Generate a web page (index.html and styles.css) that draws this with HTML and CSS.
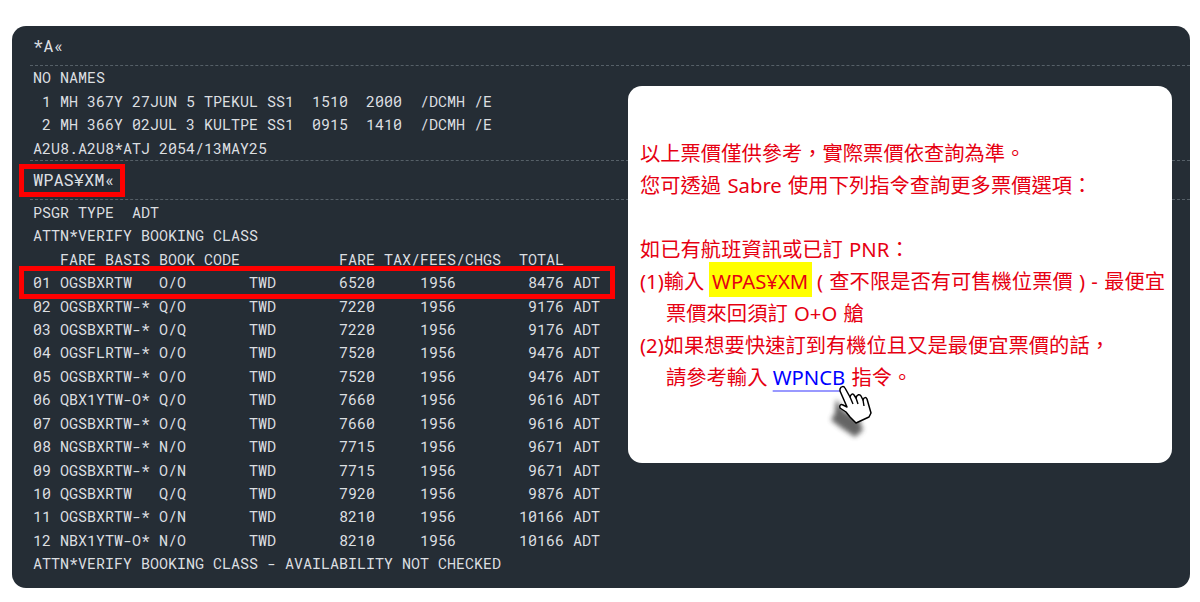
FILE: index.html
```html
<!DOCTYPE html>
<html lang="zh-Hant">
<head>
<meta charset="utf-8">
<title>WPAS</title>
<link rel="stylesheet" href="styles.css">
</head>
<body>
<main class="terminal">
<section class="block block-cmd"><pre class="cmd">*A«</pre></section>
<section class="block block-pnr"><pre>NO NAMES
 1 MH 367Y 27JUN 5 TPEKUL SS1  1510  2000  /DCMH /E
 2 MH 366Y 02JUL 3 KULTPE SS1  0915  1410  /DCMH /E
A2U8.A2U8*ATJ 2054/13MAY25</pre></section>
<section class="block block-cmd2"><pre class="cmd">WPAS¥XM«</pre><div class="mark mark-cmd"></div></section>
<section class="block block-fares"><pre>PSGR TYPE  ADT
ATTN*VERIFY BOOKING CLASS
   FARE BASIS BOOK CODE           FARE TAX/FEES/CHGS  TOTAL
01 OGSBXRTW   O/O       TWD       6520     1956        8476 ADT
02 OGSBXRTW-* Q/O       TWD       7220     1956        9176 ADT
03 OGSBXRTW-* O/Q       TWD       7220     1956        9176 ADT
04 OGSFLRTW-* O/O       TWD       7520     1956        9476 ADT
05 OGSBXRTW-* O/O       TWD       7520     1956        9476 ADT
06 QBX1YTW-O* Q/O       TWD       7660     1956        9616 ADT
07 OGSBXRTW-* O/Q       TWD       7660     1956        9616 ADT
08 NGSBXRTW-* N/O       TWD       7715     1956        9671 ADT
09 OGSBXRTW-* O/N       TWD       7715     1956        9671 ADT
10 QGSBXRTW   Q/Q       TWD       7920     1956        9876 ADT
11 OGSBXRTW-* O/N       TWD       8210     1956       10166 ADT
12 NBX1YTW-O* N/O       TWD       8210     1956       10166 ADT
ATTN*VERIFY BOOKING CLASS - AVAILABILITY NOT CHECKED</pre><div class="mark mark-row"></div></section>
<aside class="note">
<p>以上票價僅供參考，實際票價依查詢為準。</p>
<p>您可透過 Sabre 使用下列指令查詢更多票價選項：</p>
<p class="gap">如已有航班資訊或已訂 PNR：</p>
<p>(1)輸入 <span class="hl">WPAS¥XM</span> ( 查不限是否有可售機位票價 ) - 最便宜</p>
<p class="indent">票價來回須訂 O+O 艙</p>
<p>(2)如果想要快速訂到有機位且又是最便宜票價的話，</p>
<p class="indent">請參考輸入 <span class="link">WPNCB</span> 指令。</p>
<svg class="hand" viewBox="0 0 50 60" width="50" height="60" aria-hidden="true">
<defs><filter id="blur" x="-40%" y="-40%" width="180%" height="180%"><feGaussianBlur stdDeviation="2.4"/></filter></defs>
<path class="hand-shadow" filter="url(#blur)" d="M4 15 L12 27 L27 35 L31 46 L23 53 L8 43 L-1 36 L3 29 Z"/>
<path class="hand-shape" d="M8 5 C9 2 12 2 13 4 L18 13 C19 10 21 9 22 11 L24 14 C25 10 28 10 29 12 L31 16 C32 13 34 13 35 15 L39 29 L37 33 L24 39 L18 33 L14 28 L8 24 C7 21 9 20 11 21 L15 23 L8 7 Z"/>
<path class="hand-line" d="M18 13 L21 20 M24 14 L26 20 M31 16 L32 22"/>
</svg>
</aside>
</main>
</body>
</html>
```
FILE: styles.css
```css
html, body { margin: 0; padding: 0; background: #fff; }
body { width: 1200px; height: 602px; overflow: hidden; }
.terminal {
  position: relative;
  box-sizing: border-box;
  margin: 26px 10px 14px 12px;
  height: 562px;
  background: #252d35;
  border-radius: 14px;
  padding: 8px 0 0;
  color: #dcdfe1;
}
pre {
  margin: 0;
  font: 15px/23.4px "Roboto Mono", "Liberation Mono", monospace;
  padding-left: 3px;
}
pre.cmd { font-size: 17px; }
.block { position: relative; border-bottom: 1px dashed #566068; margin: 0 0 0 18px; }
.block-cmd { padding: 0 0 8px; }
.block-cmd2 { padding: 7px 0 8px; }
.block-fares { border-bottom: 0; padding-top: .6px; }
.mark { position: absolute; border: 5px solid #f00; box-sizing: border-box; }
.mark-cmd { left: -11px; top: 3px; width: 106px; height: 33px; }
.mark-row { left: -11px; top: 66px; width: 596px; height: 33px; }
.note {
  position: absolute;
  left: 616px;
  top: 60px;
  box-sizing: border-box;
  width: 544px;
  height: 377px;
  padding: 50.6px 0 0 12px;
  background: #fff;
  border-radius: 14px;
  color: #e60012;
  font: 20.3px/32.200px "Noto Sans", "Noto Sans CJK TC", sans-serif;
  word-spacing: 1px;
  white-space: nowrap;
}
.note p { margin: 0; }
.note .gap { margin-top: 31.6px; }
.note .indent { padding-left: 26px; }
.hl { background: #ff0; padding: 5px 3.5px 2px; margin-left: -2px; margin-right: -1px; }
.link { color: #00f; text-decoration: underline 2px #99f; text-underline-offset: 5px; margin-left: -1px; }
.hand { position: absolute; left: 204px; top: 298px; overflow: visible; }
.hand-shadow { fill: #4a4a4a; opacity: .85; }
.hand-shape { fill: #fff; stroke: #000; stroke-width: 1.5; stroke-linejoin: round; }
.hand-line { fill: none; stroke: #000; stroke-width: 1.4; }
```
